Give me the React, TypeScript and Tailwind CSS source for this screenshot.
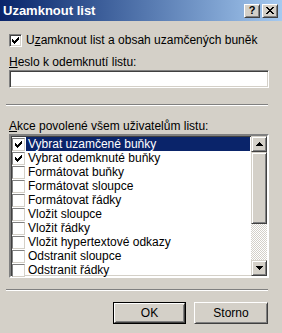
import React from "react";

const items = [
  { label: "Vybrat uzamčené buňky", checked: true },
  { label: "Vybrat odemknuté buňky", checked: true },
  { label: "Formátovat buňky", checked: false },
  { label: "Formátovat sloupce", checked: false },
  { label: "Formátovat řádky", checked: false },
  { label: "Vložit sloupce", checked: false },
  { label: "Vložit řádky", checked: false },
  { label: "Vložit hypertextové odkazy", checked: false },
  { label: "Odstranit sloupce", checked: false },
  { label: "Odstranit řádky", checked: false },
];

// klasická fajfka 7x7
function Check() {
  return (
    <svg width="7" height="7" viewBox="0 0 7 7" shapeRendering="crispEdges">
      <path
        fill="#000"
        d="M6 0h1v1h-1z M5 1h2v1h-2z M0 2h1v1h-1z M4 2h3v1h-3z M0 3h2v1h-2z M3 3h3v1h-3z M0 4h5v1h-5z M1 5h3v1h-3z M2 6h1v1h-1z"
      />
    </svg>
  );
}

function Arrow({ down }: { down?: boolean }) {
  return (
    <svg width="7" height="4" viewBox="0 0 7 4" shapeRendering="crispEdges">
      <path
        fill="#000"
        d={
          down
            ? "M0 0h7v1h-7z M1 1h5v1h-5z M2 2h3v1h-3z M3 3h1v1h-1z"
            : "M3 0h1v1h-1z M2 1h3v1h-3z M1 2h5v1h-5z M0 3h7v1h-7z"
        }
      />
    </svg>
  );
}

const raised =
  "border border-t-[#d4d0c8] border-l-[#d4d0c8] border-b-[#404040] border-r-[#404040] shadow-[inset_1px_1px_0_#ffffff,inset_-1px_-1px_0_#808080] bg-[#d4d0c8]";
const btnRaised =
  "border border-t-white border-l-white border-b-[#404040] border-r-[#404040] shadow-[inset_1px_1px_0_#d4d0c8,inset_-1px_-1px_0_#808080] bg-[#d4d0c8]";
const sunken =
  "border border-t-[#808080] border-l-[#808080] border-b-white border-r-white shadow-[inset_1px_1px_0_#404040,inset_-1px_-1px_0_#d4d0c8]";

export default function App() {
  return (
    <div className="w-[282px] h-[333px] bg-[#d4d0c8] overflow-hidden text-[12px] leading-[14px] text-black font-['Liberation_Sans',Arial,sans-serif]">
      {/* titulek */}
      <div className="h-[21px] bg-gradient-to-r from-[#0a246a] to-[#a6caf0] flex items-center pl-[3px] pr-[4px]">
        <span className="font-bold text-white text-[13px]">Uzamknout list</span>
        <div className="ml-auto flex gap-[2px]">
          <div className={`w-[16px] h-[14px] ${btnRaised} flex items-center justify-center font-bold text-[11px] leading-none`}>
            ?
          </div>
          <div className={`w-[16px] h-[14px] ${btnRaised} flex items-center justify-center`}>
            <svg width="8" height="7" viewBox="0 0 8 7" shapeRendering="crispEdges">
              <path
                fill="#000"
                d="M0 0h2v1h-2z M6 0h2v1h-2z M1 1h2v1h-2z M5 1h2v1h-2z M2 2h4v1h-4z M3 3h2v1h-2z M2 4h4v1h-4z M1 5h2v1h-2z M5 5h2v1h-2z M0 6h2v1h-2z M6 6h2v1h-2z"
              />
            </svg>
          </div>
        </div>
      </div>

      <div className="pl-[9px] pr-[13px] flex flex-col">
        <div className="mt-[12px] h-[14px] flex items-center gap-[4px]">
          <div className={`w-[13px] h-[13px] bg-white ${sunken} flex items-center justify-center`}>
            <Check />
          </div>
          <span>
            U<span className="underline">z</span>amknout list a obsah uzamčených buněk
          </span>
        </div>

        <div className="mt-[8px] h-[14px]">
          <span className="underline">H</span>eslo k odemknutí listu:
        </div>
        <div className={`mt-[1px] h-[18px] bg-white ${sunken}`} />

        <div className="mt-[16px] -ml-[3px] mr-[1px] h-[2px] border-t border-t-[#808080] border-b border-b-white" />

        <div className="mt-[13px] h-[14px]">
          <span className="underline">A</span>kce povolené všem uživatelům listu:
        </div>

        <div className={`mt-[1px] h-[144px] bg-white border-2 border-t-[#808080] border-l-[#808080] border-b-white border-r-white shadow-[inset_1px_1px_0_#404040,inset_-1px_-1px_0_#d4d0c8] p-[1px] flex`}>
          <div className="flex-1 flex flex-col -ml-[1px] -mt-[1px] pt-[1px]">
            {items.map((it, i) => (
              <div key={i} className="h-[14px] flex items-center">
                <div className="ml-[1px] w-[13px] h-[13px] bg-white border border-t-[#808080] border-l-[#808080] border-b-[#d4d0c8] border-r-[#d4d0c8] flex items-center justify-center">
                  {it.checked && <Check />}
                </div>
                <div
                  className={`ml-[1px] mr-[1px] flex-1 h-[14px] pl-[2px] flex items-center ${
                    i === 0 ? "bg-[#0a246a] text-white" : ""
                  }`}
                >
                  {it.label}
                </div>
              </div>
            ))}
          </div>
          <div className="w-[16px] -mr-[1px] -mt-[1px] -mb-[1px] flex flex-col">
            <div className={`h-[16px] ${raised} flex items-center justify-center`}>
              <Arrow />
            </div>
            <div className={`h-[72px] ${raised}`} />
            <div className="flex-1 bg-[repeating-conic-gradient(#d4d0c8_0_25%,#ffffff_0_50%)] bg-[length:2px_2px]" />
            <div className={`h-[16px] ${raised} flex items-center justify-center`}>
              <Arrow down />
            </div>
          </div>
        </div>

        <div className="mt-[11px] -ml-[3px] mr-[1px] h-[2px] border-t border-t-[#808080] border-b border-b-white" />

        <div className="mt-[11px] mr-[1px] flex justify-end gap-[8px]">
          <div className="w-[73px] h-[22px] border border-black">
            <div className={`w-full h-full ${btnRaised} flex items-center justify-center`}>OK</div>
          </div>
          <div className={`w-[74px] h-[22px] ${btnRaised} flex items-center justify-center`}>Storno</div>
        </div>
      </div>
    </div>
  );
}
